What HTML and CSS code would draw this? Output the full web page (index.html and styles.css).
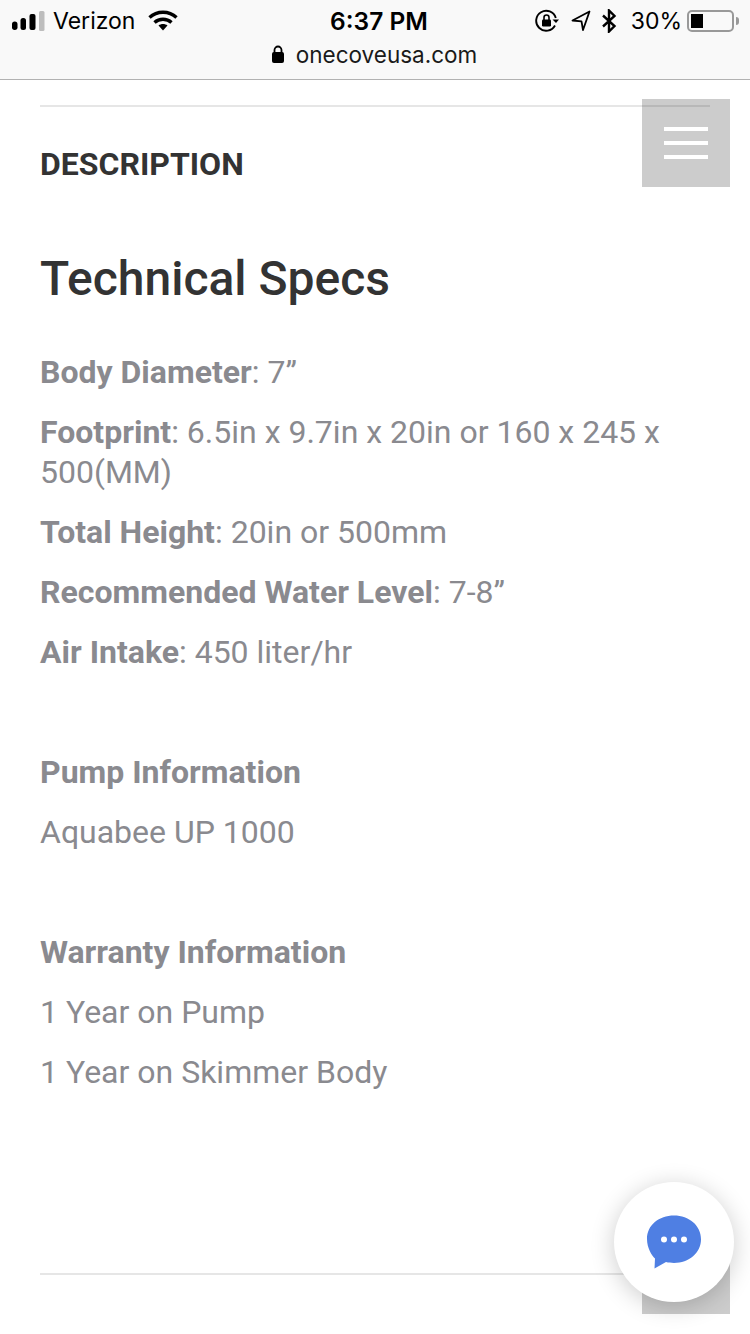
FILE: index.html
```html
<!DOCTYPE html>
<html lang="en">
<head>
<meta charset="utf-8">
<title>Technical Specs</title>
<link rel="stylesheet" href="styles.css">
</head>
<body>
<header class="browser">
  <div class="status">
    <div class="status-left">
      <svg class="signal" width="33" height="20" viewBox="0 0 33 20"><rect x="0" y="10.500" width="5.500" height="8.500" rx="2.700" fill="#000"/><rect x="8.500" y="7" width="5.500" height="12" rx="2.500" fill="#000"/><rect x="17.500" y="3" width="6" height="16" rx="2" fill="#000"/><rect x="27" y="0" width="5.500" height="20" rx="1.500" fill="#bdbdbd"/></svg>
      <span class="carrier">Verizon</span>
      <svg class="wifi" width="30" height="22" viewBox="0 0 30 22"><path d="M1.500 7.500C9 .5 21 .5 28.500 7.500" fill="none" stroke="#000" stroke-width="3.400"/><path d="M6.500 12.500c4.800-4.300 12.200-4.300 17 0" fill="none" stroke="#000" stroke-width="3.400"/><path d="M10.500 15.500c2.600-2 6.400-2 9 0L15 20.500z" fill="#000"/></svg>
    </div>
    <div class="time">6:37 PM</div>
    <div class="status-right">
      <svg class="rotlock" width="24" height="24" viewBox="0 0 24 24"><path d="M20 16.500A10 10 0 1 1 20.800 9" fill="none" stroke="#000" stroke-width="1.900"/><path d="M17.500 10.500h6.500l-3 3.500z" fill="#000"/><rect x="7" y="10.500" width="9" height="7" rx="1.200" fill="#000"/><path d="M9 11V8.500a2.500 2.500 0 0 1 5 0V11" fill="none" stroke="#000" stroke-width="1.600"/></svg>
      <svg class="loc" width="20" height="22" viewBox="0 0 20 22"><path d="M18.500 1.500 1.500 10.500l9 .8 1.500 8.700z" fill="none" stroke="#000" stroke-width="1.800" stroke-linejoin="round"/></svg>
      <svg class="bt" width="16" height="24" viewBox="0 0 16 24"><path d="M2 6.500 13.500 17 8 22.500V1.500L13.500 7 2 17.500" fill="none" stroke="#000" stroke-width="2.400"/></svg>
      <span class="pct">30%</span>
      <div class="battery"><div class="charge"></div></div>
      <div class="nub"></div>
    </div>
  </div>
  <div class="address">
    <svg class="lock" width="14" height="18" viewBox="0 0 14 18"><rect x="1" y="7" width="12" height="11" rx="2" fill="#000"/><path d="M3.500 8V5a3.500 3.500 0 0 1 7 0v3" fill="none" stroke="#000" stroke-width="1.800"/></svg>
    <span class="url">onecoveusa.com</span>
  </div>
</header>

<main class="content">
  <hr class="rule">
  <h2 class="tab-title">DESCRIPTION</h2>
  <h3 class="heading">Technical Specs</h3>
  <p><strong>Body Diameter</strong>: 7”</p>
  <p><strong>Footprint</strong>: 6.5in x 9.7in x 20in or 160 x 245 x 500(MM)</p>
  <p><strong>Total Height</strong>: 20in or 500mm</p>
  <p><strong>Recommended Water Level</strong>: 7-8”</p>
  <p><strong>Air Intake</strong>: 450 liter/hr</p>
  <p class="spacer">&nbsp;</p>
  <p><strong>Pump Information</strong></p>
  <p>Aquabee UP 1000</p>
  <p class="spacer">&nbsp;</p>
  <p><strong>Warranty Information</strong></p>
  <p>1 Year on Pump</p>
  <p>1 Year on Skimmer Body</p>
  <hr class="rule rule-bottom">
</main>

<button class="menu menu-top" aria-label="Menu"><span></span><span></span><span></span></button>
<div class="menu menu-bottom"></div>
<button class="chat" aria-label="Chat">
  <svg width="56" height="56" viewBox="0 0 56 56"><path d="M28 1.500C13 1.500 1 11 1 25c0 9 4.800 16.500 8 19.500L8.500 54.500 20 48c2.500.6 5 .9 8 .9 15 0 27-10 27-23.700S43 1.500 28 1.500z" fill="#4f7fe3"/><circle cx="18" cy="25.500" r="3" fill="#fff"/><circle cx="28" cy="25.500" r="3" fill="#fff"/><circle cx="38" cy="25.500" r="3" fill="#fff"/></svg>
</button>
</body>
</html>
```

FILE: styles.css
```css
* { box-sizing: border-box; }
html, body { margin: 0; padding: 0; }
body {
  width: 750px;
  height: 1334px;
  overflow: hidden;
  background: #fff;
  font-family: Roboto, "Liberation Sans", sans-serif;
  position: relative;
}
.browser {
  height: 80px;
  background: #f9f9f9;
  border-bottom: 1px solid #b2b2b2;
  font-family: Inter, "Liberation Sans", sans-serif;
  color: #000;
}
.status {
  height: 40px;
  padding: 1px 11px 0 12px;
  display: grid;
  grid-template-columns: 1fr auto 1fr;
  align-items: center;
}
.status-left { display: flex; align-items: center; }
.carrier { font-size: 23px; margin-left: 8px; }
.wifi { margin-left: 13px; }
.time { font-size: 24.500px; font-weight: 600; margin-left: 7px; }
.status-right { display: flex; align-items: center; justify-content: flex-end; }
.rotlock { margin-right: 12px; }
.loc { margin-right: 10px; }
.bt { margin-right: 14px; }
.pct { font-size: 23px; margin-right: 5px; }
.battery {
  width: 47px;
  height: 22px;
  border: 2px solid #999;
  border-radius: 5px;
  padding: 2px;
}
.charge { width: 12px; height: 14px; background: #000; }
.nub { width: 3px; height: 8px; background: #999; border-radius: 0 3px 3px 0; margin-left: 2px; }
.address {
  height: 28px;
  display: flex;
  justify-content: center;
  align-items: center;
  gap: 11px;
  padding-right: 2px;
}
.url { font-size: 22.500px; color: #1a1a1a; }
.content { padding: 25px 40px 0; }
.rule { height: 2px; margin: 0; border: 0; background: #e6e6e6; }
.tab-title {
  margin: 37px 0 0;
  font-size: 32px;
  line-height: 40px;
  font-weight: 700;
  color: #333;
}
.heading {
  margin: 67px 0 0;
  font-size: 48px;
  line-height: 56px;
  font-weight: 500;
  color: #333;
}
p {
  margin: 20px 0 0;
  font-size: 32px;
  line-height: 40px;
  color: #8a8a8f;
}
.heading + p { margin-top: 45px; }
strong { font-weight: 700; }
.rule-bottom { margin-top: 181px; }
.menu {
  position: absolute;
  left: 642px;
  width: 88px;
  height: 88px;
  background: rgba(0, 0, 0, 0.2);
  border: 0;
}
.menu-top {
  top: 99px;
  padding: 0;
  display: flex;
  flex-direction: column;
  align-items: center;
  justify-content: center;
  gap: 10px;
}
.menu-top span { display: block; width: 44px; height: 4px; background: #fff; }
.menu-bottom { top: 1226px; }
.chat {
  position: absolute;
  left: 614px;
  top: 1182px;
  width: 120px;
  height: 120px;
  padding: 0;
  border: 0;
  border-radius: 50%;
  background: #fff;
  box-shadow: 0 4px 24px rgba(0, 0, 0, 0.2);
  display: flex;
  align-items: center;
  justify-content: center;
}
```
